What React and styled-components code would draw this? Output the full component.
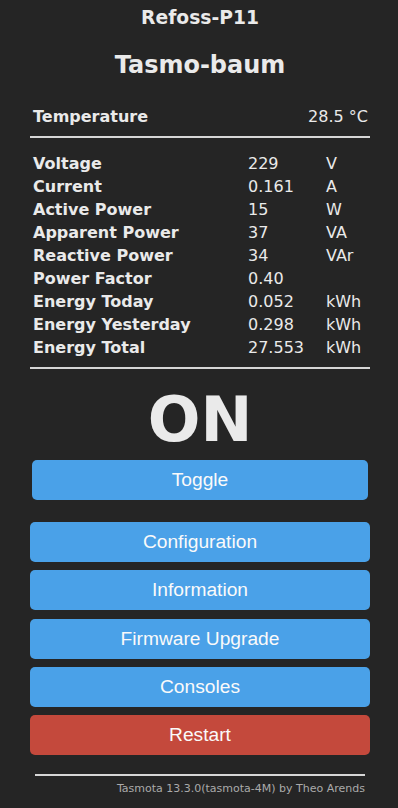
import React from "react";
import styled, { createGlobalStyle } from "styled-components";

const GlobalStyle = createGlobalStyle`
  html, body {
    margin: 0;
    padding: 0;
    background: #252525;
  }
  body {
    font-family: "DejaVu Sans", Verdana, sans-serif;
    color: #eaeaea;
  }
`;

const sensors = [
  { name: "Voltage", value: "229", unit: "V" },
  { name: "Current", value: "0.161", unit: "A" },
  { name: "Active Power", value: "15", unit: "W" },
  { name: "Apparent Power", value: "37", unit: "VA" },
  { name: "Reactive Power", value: "34", unit: "VAr" },
  { name: "Power Factor", value: "0.40", unit: "" },
  { name: "Energy Today", value: "0.052", unit: "kWh" },
  { name: "Energy Yesterday", value: "0.298", unit: "kWh" },
  { name: "Energy Total", value: "27.553", unit: "kWh" },
];

const menu = [
  { label: "Configuration" },
  { label: "Information" },
  { label: "Firmware Upgrade" },
  { label: "Consoles" },
  { label: "Restart", danger: true },
];

const App = () => {
  return (
    <Page>
      <GlobalStyle />
      <Container>
        <Module>Refoss-P11</Module>
        <DeviceName>Tasmo-baum</DeviceName>

        <TempRow>
          <Label>Temperature</Label>
          <Value>28.5 °C</Value>
        </TempRow>
        <Rule />

        <SensorTable>
          {sensors.map((s) => (
            <SensorRow key={s.name}>
              <Label>{s.name}</Label>
              <Value>{s.value}</Value>
              <Value>{s.unit}</Value>
            </SensorRow>
          ))}
        </SensorTable>
        <Rule />

        <State>ON</State>
        <ToggleWrap>
          <Button>Toggle</Button>
        </ToggleWrap>

        <Menu>
          {menu.map((m) => (
            <Button key={m.label} $danger={m.danger}>
              {m.label}
            </Button>
          ))}
        </Menu>

        <Footer>
          <FooterRule />
          <FooterText>Tasmota 13.3.0(tasmota-4M) by Theo Arends</FooterText>
        </Footer>
      </Container>
    </Page>
  );
};

export default App;

const Page = styled.div`
  width: 398px;
  min-height: 808px;
  padding: 0 28px 0 30px;
  box-sizing: border-box;
`;

const Container = styled.div`
  width: 340px;
  display: flex;
  flex-direction: column;
`;

const Module = styled.h3`
  margin: 7px 0 0;
  font-size: 18.72px;
  line-height: 22px;
  font-weight: bold;
  text-align: center;
`;

const DeviceName = styled.h2`
  margin: 22px 0 0;
  font-size: 24px;
  line-height: 28px;
  font-weight: bold;
  text-align: center;
`;

const TempRow = styled.div`
  margin-top: 26px;
  display: flex;
  justify-content: space-between;
  padding: 0 2px 0 3px;
  font-size: 16px;
  line-height: 23px;
`;

const Label = styled.span`
  font-weight: bold;
`;

const Value = styled.span`
  font-weight: normal;
  white-space: nowrap;
`;

const Rule = styled.div`
  margin-top: 8px;
  height: 2px;
  background: #d6d6d6;
`;

const SensorTable = styled.div`
  margin-top: 14px;
  display: flex;
  flex-direction: column;
`;

const SensorRow = styled.div`
  display: grid;
  grid-template-columns: 215px 78px 1fr;
  padding-left: 3px;
  font-size: 16px;
  line-height: 23px;
`;

const State = styled.div`
  margin-top: 16px;
  font-size: 62px;
  line-height: 70px;
  font-weight: bold;
  text-align: center;
`;

const ToggleWrap = styled.div`
  margin-top: 5px;
  padding: 0 2px;
`;

const Menu = styled.div`
  margin-top: 22px;
  display: flex;
  flex-direction: column;
  gap: 8.25px;
`;

const Button = styled.button`
  width: 100%;
  height: 40px;
  border: 0;
  border-radius: 5px;
  background: ${(p) => (p.$danger ? "#c4493c" : "#4aa1e8")};
  color: #fafafa;
  font-family: "Liberation Sans", Arial, sans-serif;
  font-size: 19.2px;
  padding: 0;
  cursor: pointer;
`;

const Footer = styled.div`
  margin-top: 19px;
  padding: 0 5px;
`;

const FooterRule = styled.div`
  height: 2px;
  background: #d6d6d6;
`;

const FooterText = styled.div`
  margin-top: 6px;
  font-size: 11px;
  line-height: 14px;
  color: #aaaaaa;
  text-align: right;
`;
